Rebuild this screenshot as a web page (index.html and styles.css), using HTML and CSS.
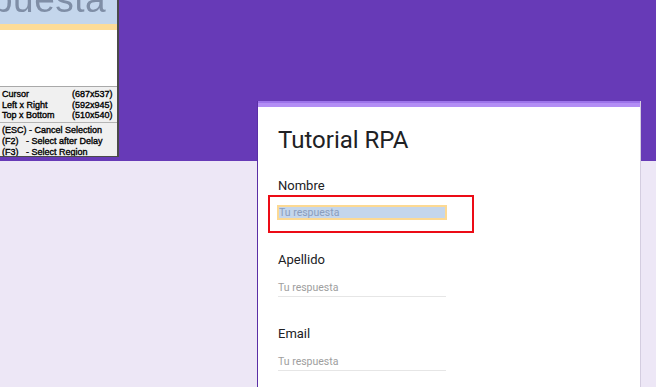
FILE: index.html
```html
<!DOCTYPE html>
<html lang="es">
<head>
    <meta charset="UTF-8">
    <title>Tutorial RPA</title>
    <link rel="stylesheet" href="styles.css">
</head>
<body>
<div class="page">
    <section class="card">
        <div class="card-bar"></div>
        <div class="card-body">
            <h1 class="title">Tutorial RPA</h1>

            <div class="question">
                <p class="label">Nombre</p>
                <div class="answer answer-active">
                    <span class="answer-sel">Tu respuesta</span>
                </div>
                <div class="mark"></div>
            </div>

            <div class="question">
                <p class="label">Apellido</p>
                <div class="answer">Tu respuesta</div>
            </div>

            <div class="question">
                <p class="label">Email</p>
                <div class="answer">Tu respuesta</div>
            </div>
        </div>
    </section>
</div>

<div class="zoomer">
    <div class="zoom-view">
        <div class="zoom-field"><span class="zoom-text">puesta</span></div>
    </div>
    <div class="zoom-info">
        <ul class="zoom-rows">
            <li><span>Cursor</span><span>(687x537)</span></li>
            <li><span>Left x Right</span><span>(592x945)</span></li>
            <li><span>Top x Bottom</span><span>(510x540)</span></li>
        </ul>
        <ul class="zoom-keys">
            <li>(ESC) - Cancel Selection</li>
            <li>(F2)&nbsp;&nbsp;&nbsp;- Select after Delay</li>
            <li>(F3)&nbsp;&nbsp;&nbsp;- Select Region</li>
        </ul>
    </div>
</div>
</body>
</html>
```

FILE: styles.css
```css
body, ul, p, h1 {
    margin: 0; padding: 0;
}
li {
    list-style: none;
}
body {
    font-family: Roboto, "Liberation Sans", sans-serif;
    background: linear-gradient(#673ab7 0, #673ab7 161px, #ede7f6 161px);
    height: 387px;
    overflow: hidden;
}
.page {
    padding: 101px 0 0 257px;
}

/* form card */
.card {
    width: 382px; height: 300px;
    background: #fff;
    border-right: 1px solid #d4cde0;
    border-left: 1px solid #5a2fa6;
}
.card-bar {
    height: 6px;
    background: linear-gradient(#9c73ea 0, #9c73ea 2px, #b38ef5 2px);
}
.card-body {
    padding: 17px 0 0 20px;
}
.title {
    font-size: 24px; line-height: 32px; font-weight: 400; color: #202124;
}
.question {
    position: relative;
    margin-top: 20px;
}
.question + .question {
    margin-top: 27px;
}
.label {
    font-size: 13px; line-height: 20px; color: #202124;
}
.answer {
    width: 168px; margin-top: 11px;
    font-size: 10.5px; line-height: 14px; color: #9e9e9e;
    border-bottom: 1px solid #e6e6e6;
    padding-bottom: 1px;
}
.answer-active {
    width: 170px;
    border-bottom: 0; padding-bottom: 3px; margin-top: 9px;
    margin-left: -1px;
}
.answer-sel {
    display: block; height: 11px; line-height: 11px;
    background: #c4d6ec; color: #8a9dbd;
    border: 2px solid #fcd993;
    padding-left: 0;
}
.mark {
    position: absolute;
    left: -10px; top: 19px;
    width: 202px; height: 34px;
    border: 2px solid #ec0c16;
}

/* screen capture magnifier */
.zoomer {
    position: absolute; left: 0; top: 0;
    width: 117px; height: 156px;
    background: #fff;
    border-right: 2px solid #4a4a4a;
    border-bottom: 1px solid #4a4a4a;
    overflow: hidden;
    font-family: "Liberation Sans", Arial, sans-serif;
}
.zoom-view {
    height: 86px;
}
.zoom-field {
    height: 24px;
    background: #c4d6ec;
    border-bottom: 6px solid #fddc98;
    overflow: hidden;
}
.zoom-text {
    display: block;
    margin: -20px 0 0 -8px;
    font-size: 37px; line-height: 40px;
    color: #7f8ea6; letter-spacing: 0.5px;
    filter: blur(0.5px);
}
.zoom-info {
    height: 69px;
    background: #f0f0f0;
    border-top: 1px solid #a9a9a9;
    font-size: 9px; color: #000;
    -webkit-text-stroke: 0.35px #000;
}
.zoom-rows {
    padding: 2px 0 1px 2px;
    border-bottom: 1px solid #b5b5b5;
}
.zoom-rows li {
    display: grid; grid-template-columns: 70px auto;
    line-height: 10.7px;
}
.zoom-keys {
    padding: 2px 0 0 2px;
}
.zoom-keys li {
    line-height: 10.8px;
}
```
